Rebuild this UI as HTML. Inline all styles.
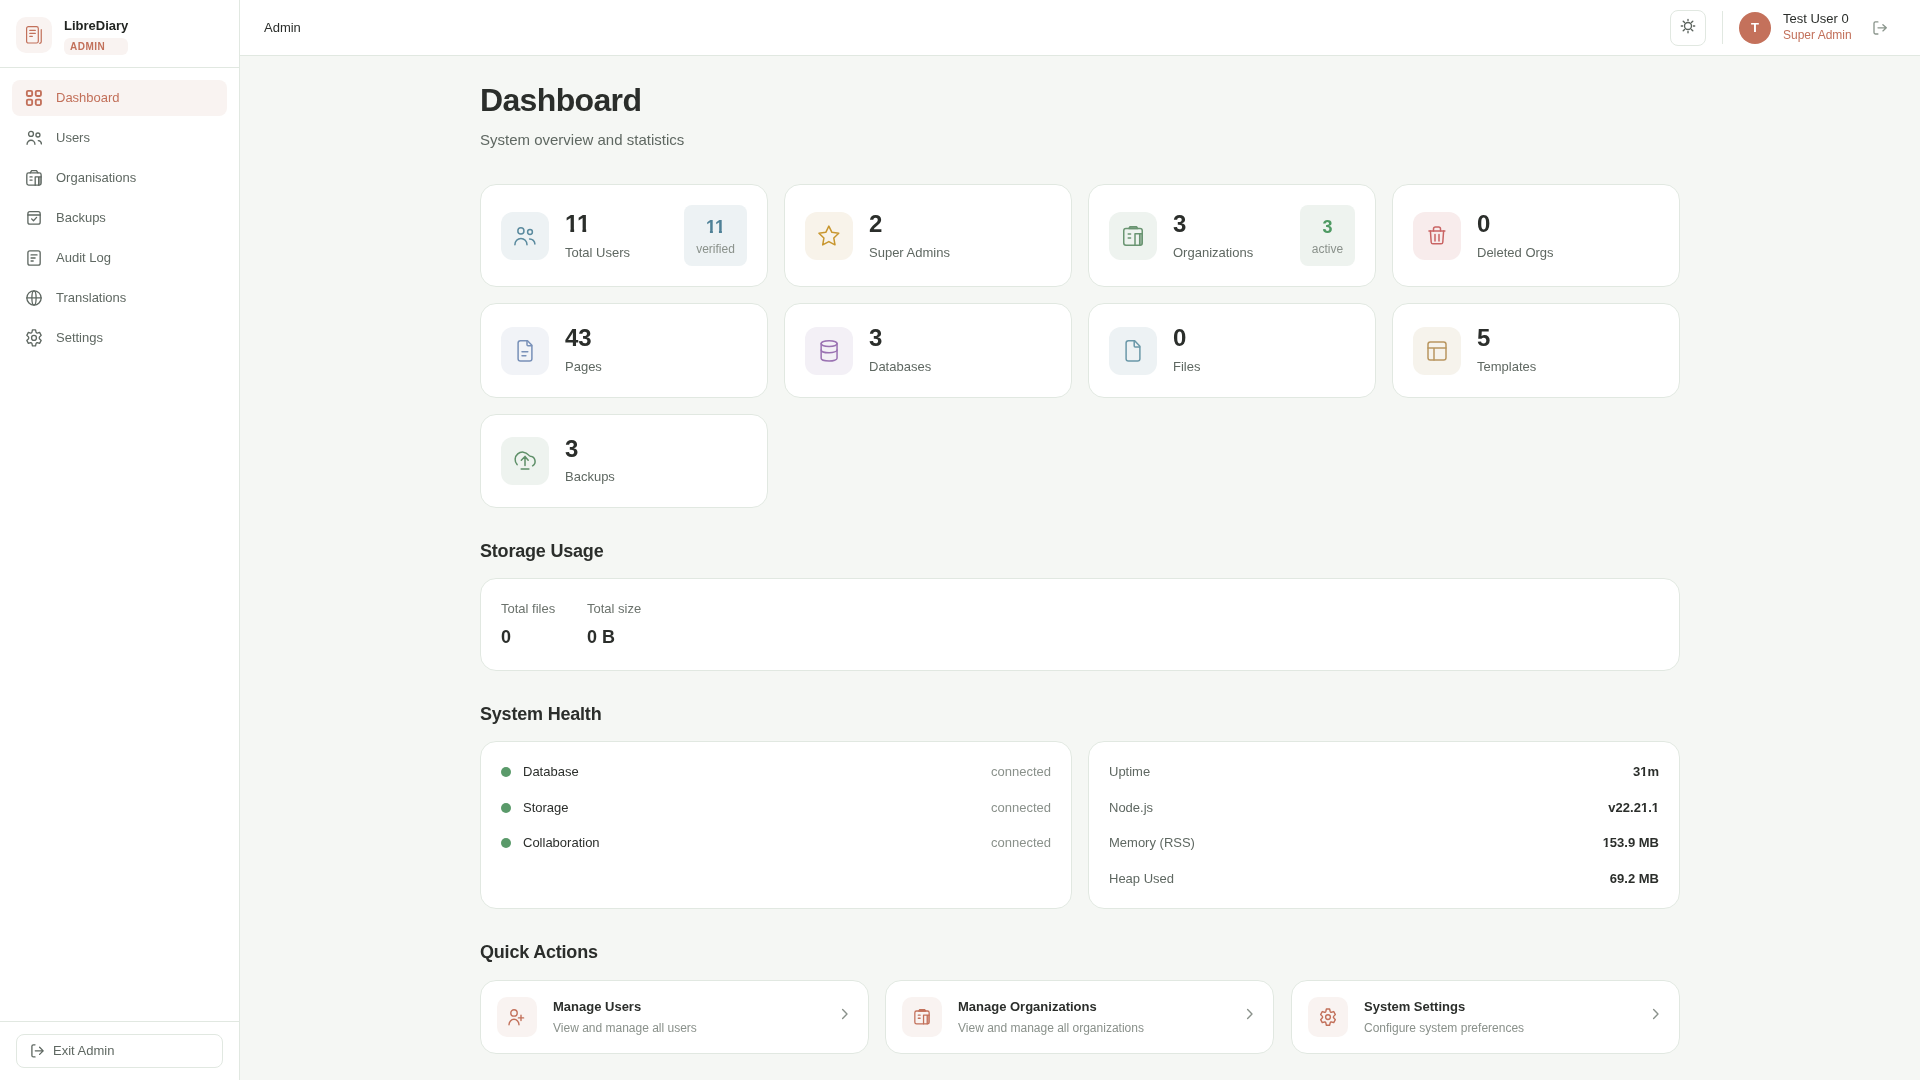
<!DOCTYPE html>
<html>
<head>
<meta charset="utf-8">
<title>LibreDiary Admin</title>
<style>
*{box-sizing:border-box;margin:0;padding:0}
html,body{width:1920px;height:1080px;overflow:hidden}
body{font-family:"Liberation Sans",sans-serif;background:#f5f7f4;color:#2b2e2b;position:relative}
.abs{position:absolute;display:block;overflow:visible}
.side{position:absolute;left:0;top:0;width:240px;height:1080px;background:#fff;border-right:1px solid #e1e8e1}
.brand{position:absolute;left:0;top:0;width:239px;height:68px;border-bottom:1px solid #e1e8e1}
.logo{position:absolute;left:16px;top:17px;width:36px;height:36px;border-radius:10px;background:#f9f3f1}
.bname{position:absolute;left:64px;top:18px;font-size:13px;font-weight:700;line-height:16px;color:#222522;white-space:nowrap}
.badge{position:absolute;left:64px;top:38px;width:64px;height:17px;border-radius:6px;background:#f9f3f1;color:#c2705a;font-size:10px;font-weight:700;letter-spacing:0.5px;line-height:17px;padding-left:6px}
.nav{position:absolute;left:12px;width:215px;height:36px;border-radius:8px;font-size:13px;color:#5f6862;line-height:36px;white-space:nowrap}
.nav.active{background:#f9f3f1;color:#c2705a}
.nav span{position:absolute;left:44px;top:0}
.foot{position:absolute;left:0;top:1021px;width:239px;height:59px;border-top:1px solid #e1e8e1}
.exit{position:absolute;left:16px;top:12px;width:207px;height:34px;border:1px solid #e1e8e1;border-radius:8px;font-size:13px;color:#5f6862;line-height:32px}
.exit span{position:absolute;left:36px;top:0}
.top{position:absolute;left:240px;top:0;width:1680px;height:56px;background:#fff;border-bottom:1px solid #e1e8e1}
.crumb{position:absolute;left:24px;top:0;line-height:55px;font-size:13px;color:#2b2e2b}
.themebtn{position:absolute;left:1430px;top:10px;width:36px;height:36px;border:1px solid #e1e8e1;border-radius:8px}
.vdiv{position:absolute;left:1482px;top:11px;width:1px;height:33px;background:#e1e8e1}
.avatar{position:absolute;left:1499px;top:12px;width:32px;height:32px;border-radius:50%;background:#c4715b;color:#fff;font-size:13px;font-weight:700;text-align:center;line-height:32px}
.uname{position:absolute;left:1543px;top:11px;font-size:13px;line-height:16px;color:#2b2e2b;white-space:nowrap}
.urole{position:absolute;left:1543px;top:28px;font-size:12px;line-height:15px;color:#c2705a;white-space:nowrap}
.h1{position:absolute;left:480px;top:80px;font-size:32px;font-weight:700;line-height:40px;letter-spacing:-0.65px;color:#2b2e2b;white-space:nowrap}
.sub{position:absolute;left:480px;top:130px;font-size:15px;line-height:20px;color:#5f6862;white-space:nowrap}
.card{position:absolute;background:#fff;border:1px solid #e1e8e1;border-radius:16px}
.ib{position:absolute;left:20px;width:48px;height:48px;border-radius:12px}
.num{position:absolute;left:84px;font-size:24px;font-weight:700;line-height:28px;color:#2b2e2b}
.lbl{position:absolute;left:84px;font-size:13px;line-height:16px;color:#5f6862;white-space:nowrap}
.pill{position:absolute;right:20px;top:20px;width:63px;height:61px;border-radius:8px;text-align:center}
.pill b{position:absolute;left:0;right:0;top:11px;font-size:18px;line-height:22px}
.pill i{position:absolute;left:0;right:0;top:37px;font-style:normal;font-size:12px;line-height:15px;color:#8a918b}
.h2{position:absolute;left:480px;font-size:18px;font-weight:700;line-height:22px;letter-spacing:-0.2px;color:#2b2e2b;white-space:nowrap}
.slbl{position:absolute;font-size:13px;line-height:16px;color:#6b726c;white-space:nowrap}
.sval{position:absolute;font-size:18px;font-weight:700;line-height:22px;color:#2b2e2b;white-space:nowrap}
.row{position:absolute;left:20px;right:20px;height:20px;font-size:13px;line-height:20px;white-space:nowrap}
.dot{position:absolute;left:0;top:5px;width:10px;height:10px;border-radius:50%;background:#5a9a6a}
.rn{position:absolute;left:22px;top:0;color:#2b2e2b}
.rv{position:absolute;right:0;top:0;color:#8a918b}
.kl{position:absolute;left:0;top:0;color:#5f6862}
.kv{position:absolute;right:0;top:0;color:#2b2e2b;font-weight:700}
.qa{position:absolute;top:980px;width:389px;height:74px;background:#fff;border:1px solid #e1e8e1;border-radius:16px}
.qi{position:absolute;left:16px;top:16px;width:40px;height:40px;border-radius:10px;background:#f9f3f1}
.qt{position:absolute;left:72px;top:18px;font-size:13px;font-weight:700;line-height:16px;color:#2b2e2b;white-space:nowrap}
.qd{position:absolute;left:72px;top:40px;font-size:12px;line-height:15px;color:#8a918b;white-space:nowrap}
body{-webkit-font-smoothing:antialiased}
.side,.top,.card,.qa,.h1,.h2,.sub{will-change:transform}
.o24{display:inline-block;clip-path:polygon(0 0,100% 0,100% 18.75px,9.14px 18.75px,9.14px 100%,5.35px 100%,5.35px 18.75px,0 18.75px)}.o24.k{margin-right:-1.324px}.o18{display:inline-block;clip-path:polygon(0 0,100% 0,100% 14.36px,6.92px 14.36px,6.92px 100%,3.95px 100%,3.95px 14.36px,0 14.36px)}.o18.k{margin-right:-0.993px}.o13{display:inline-block;clip-path:polygon(0 0,100% 0,100% 11.87px,5.07px 11.87px,5.07px 100%,2.78px 100%,2.78px 11.87px,0 11.87px)}.o13.k{margin-right:-0.717px}
</style>
</head>
<body>
<div class="side">
  <div class="brand">
    <div class="logo"><svg class="abs " style="left:10px;top:9px;color:#c2705a" width="19" height="19" viewBox="0 0 19 19" fill="none" stroke="#c2705a" stroke-width="1.2" stroke-linecap="round" stroke-linejoin="round"><rect x="0.6" y="0.6" width="11.7" height="16.4" rx="1.8"/><path d="M3.8 4.4H9.3M3.8 7.4H9.3M3.8 10.4H6.3"/><path d="M15.25 3.7V15.8Q15.25 17.1 13.8 17.3"/></svg></div>
    <div class="bname">LibreDiary</div>
    <div class="badge">ADMIN</div>
  </div>
<div class="nav active" style="top:80px"><svg class="abs " style="left:12px;top:8px;color:#c2705a" width="20" height="20" viewBox="0 0 20 20" fill="none" stroke="#c2705a" stroke-width="1.33" stroke-linecap="round" stroke-linejoin="round"><g stroke-width="1.85"><rect x="2.85" y="2.85" width="5.3" height="5.1" rx="1.2"/><rect x="11.75" y="2.85" width="5.2" height="5.1" rx="1.2"/><rect x="2.85" y="11.65" width="5.3" height="5.4" rx="1.2"/><rect x="11.75" y="11.65" width="5.2" height="5.4" rx="1.2"/></g></svg><span>Dashboard</span></div>
<div class="nav" style="top:120px"><svg class="abs " style="left:12px;top:8px;color:#5f6862" width="20" height="20" viewBox="0 0 20 20" fill="none" stroke="#5f6862" stroke-width="1.33" stroke-linecap="round" stroke-linejoin="round"><circle cx="7" cy="5.9" r="2.45"/><circle cx="13.95" cy="7" r="2"/><path d="M3.07 16.33A3.93 4.1 0 0 1 10.93 16.33"/><path d="M14.3 12.6A3.4 3.4 0 0 1 17.4 15.9"/></svg><span>Users</span></div>
<div class="nav" style="top:160px"><svg class="abs " style="left:12px;top:8px;color:#5f6862" width="20" height="20" viewBox="0 0 20 20" fill="none" stroke="#5f6862" stroke-width="1.33" stroke-linecap="round" stroke-linejoin="round"><rect x="2.8" y="4.9" width="14.33" height="12.27" rx="1.8"/><path d="M6.2 4.9L7.6 2.7H12.5L13.9 4.9"/><path d="M6 8.9H8.1M6 12.06H8.1"/><path d="M11.2 17.17V8.9H17.13M14.7 8.9V17.17"/><rect x="14.7" y="8.9" width="2.4" height="8.2" fill="currentColor" stroke="none" opacity=".5"/></svg><span>Organisations</span></div>
<div class="nav" style="top:200px"><svg class="abs " style="left:12px;top:8px;color:#5f6862" width="20" height="20" viewBox="0 0 20 20" fill="none" stroke="#5f6862" stroke-width="1.33" stroke-linecap="round" stroke-linejoin="round"><rect x="3.9" y="3.7" width="12.27" height="12.5" rx="2"/><path d="M3.9 7H16.17"/><path d="M7.6 10.9L9.5 12.8L12.6 9.4"/></svg><span>Backups</span></div>
<div class="nav" style="top:240px"><svg class="abs " style="left:12px;top:8px;color:#5f6862" width="20" height="20" viewBox="0 0 20 20" fill="none" stroke="#5f6862" stroke-width="1.33" stroke-linecap="round" stroke-linejoin="round"><rect x="3.9" y="2.85" width="12.27" height="14.32" rx="2"/><path d="M7.07 6.88H13.03M7.07 10H11.1M7.07 13H9.2"/></svg><span>Audit Log</span></div>
<div class="nav" style="top:280px"><svg class="abs " style="left:12px;top:8px;color:#5f6862" width="20" height="20" viewBox="0 0 20 20" fill="none" stroke="#5f6862" stroke-width="1.33" stroke-linecap="round" stroke-linejoin="round"><circle cx="10" cy="9.95" r="7.15"/><path d="M2.85 9.95H17.15"/><ellipse cx="10" cy="9.95" rx="2.1" ry="7.15"/></svg><span>Translations</span></div>
<div class="nav" style="top:320px"><svg class="abs " style="left:12px;top:8px;color:#5f6862" width="20" height="20" viewBox="0 0 20 20" fill="none" stroke="#5f6862" stroke-width="1.33" stroke-linecap="round" stroke-linejoin="round"><path transform="translate(10 9.9) scale(0.92 1) translate(-10 -9.9)" vector-effect="non-scaling-stroke" d="M7.75 4.34L8.30 1.88 L11.70 1.88 L12.25 4.34 Q12.70 5.22 13.69 5.17L16.09 4.41 L17.80 7.37 L15.94 9.06 Q15.40 9.90 15.94 10.74L17.80 12.43 L16.09 15.39 L13.69 14.63 Q12.70 14.58 12.25 15.46L11.70 17.92 L8.30 17.92 L7.75 15.46 Q7.30 14.58 6.31 14.63L3.91 15.39 L2.20 12.43 L4.06 10.74 Q4.60 9.90 4.06 9.06L2.20 7.37 L3.91 4.41 L6.31 5.17 Q7.30 5.22 7.75 4.34Z"/><circle cx="10" cy="9.9" r="2.45"/></svg><span>Settings</span></div>
  <div class="foot">
    <div class="exit"><svg class="abs " style="left:9px;top:7px;color:#5f6862" width="20" height="20" viewBox="0 0 20 20" fill="none" stroke="#5f6862" stroke-width="1.33" stroke-linecap="round" stroke-linejoin="round"><path d="M9 2.8H7.4Q5.9 2.8 5.9 4.3V13.4Q5.9 14.9 7.4 14.9H9"/><path d="M9.3 8.85H17.1M13.6 5.3L17.2 8.85L13.6 12.4"/></svg><span>Exit Admin</span></div>
  </div>
</div>
<div class="top">
  <div class="crumb">Admin</div>
  <div class="themebtn"><svg class="abs " style="left:9px;top:7px;color:#5a625c" width="16" height="16" viewBox="0 0 16 16" fill="none" stroke="#5a625c" stroke-width="1.35" stroke-linecap="round" stroke-linejoin="round"><circle cx="8" cy="8" r="3.5"/><path d="M8 1.3V2.6M8 13.4V14.7M1.3 8H2.6M13.4 8H14.7M3.2 3.2L4.6 4.6M11.4 11.4L12.8 12.8M3.2 12.8L4.6 11.4M11.4 4.6L12.8 3.2"/></svg></div>
  <div class="vdiv"></div>
  <div class="avatar">T</div>
  <div class="uname">Test User 0</div>
  <div class="urole">Super Admin</div>
  <svg class="abs " style="left:1632px;top:20px;color:#8a958c" width="16" height="16" viewBox="0 0 16 16" fill="none" stroke="#8a958c" stroke-width="1.33" stroke-linecap="round" stroke-linejoin="round"><path d="M5.9 1.9H3.4Q2 1.9 2 3.3V12.6Q2 14 3.4 14H5.9"/><path d="M6 7.8H14.2M10.9 4.7L14.3 7.8L10.9 10.9"/></svg>
</div>
<div class="h1">Dashboard</div>
<div class="sub">System overview and statistics</div>
<div class="card" style="left:480px;top:184px;width:288px;height:103px"><div class="ib" style="top:27px;background:#edf2f4"><svg class="abs " style="left:12px;top:12px;color:#5a8a9e" width="24" height="24" viewBox="0 0 24 24" fill="none" stroke="#5a8a9e" stroke-width="1.5" stroke-linecap="round" stroke-linejoin="round"><circle cx="7.9" cy="6.9" r="3.05"/><circle cx="17" cy="8" r="2.4"/><path d="M1.9 20.7A6 6.2 0 0 1 14 20.7"/><path d="M16.6 14.9A5.2 5.2 0 0 1 21.9 20"/></svg></div><div class="num" style="top:25px"><span class="o24 k">1</span><span class="o24">1</span></div><div class="lbl" style="top:60px">Total Users</div><div class="pill" style="width:63px;background:#edf2f4"><b style="color:#4f8197"><span class="o18 k">1</span><span class="o18">1</span></b><i>verified</i></div></div>
<div class="card" style="left:784px;top:184px;width:288px;height:103px"><div class="ib" style="top:27px;background:#f8f3ea"><svg class="abs " style="left:12px;top:12px;color:#c8962e" width="24" height="24" viewBox="0 0 24 24" fill="none" stroke="#c8962e" stroke-width="1.5" stroke-linecap="round" stroke-linejoin="round"><path d="M11.85 2.05L14.9 8.3L21.75 9.25L16.8 14.05L18 20.85L11.85 17.6L5.7 20.85L6.9 14.05L1.95 9.25L8.8 8.3Z"/></svg></div><div class="num" style="top:25px">2</div><div class="lbl" style="top:60px">Super Admins</div></div>
<div class="card" style="left:1088px;top:184px;width:288px;height:103px"><div class="ib" style="top:27px;background:#eef3ef"><svg class="abs " style="left:12px;top:12px;color:#6a9572" width="24" height="24" viewBox="0 0 24 24" fill="none" stroke="#6a9572" stroke-width="1.5" stroke-linecap="round" stroke-linejoin="round"><rect x="2.75" y="4.55" width="18.5" height="16.6" rx="2.2"/><path d="M7.8 4.55L9 2.75H15.5L16.7 4.55Z" fill="currentColor" fill-opacity=".45"/><path d="M7.2 9.9H9.6M7.2 13.9H9.6"/><path d="M14 21.15V9.8H21.25M18.7 9.8V21.15"/><rect x="18.7" y="9.8" width="2.55" height="11.3" fill="currentColor" stroke="none" opacity=".55"/></svg></div><div class="num" style="top:25px">3</div><div class="lbl" style="top:60px">Organizations</div><div class="pill" style="width:55px;background:#eef3ef"><b style="color:#4e9a63">3</b><i>active</i></div></div>
<div class="card" style="left:1392px;top:184px;width:288px;height:103px"><div class="ib" style="top:27px;background:#f8ecec"><svg class="abs " style="left:12px;top:12px;color:#c96464" width="24" height="24" viewBox="0 0 24 24" fill="none" stroke="#c96464" stroke-width="1.5" stroke-linecap="round" stroke-linejoin="round"><path d="M3.95 7.05H19.85"/><path d="M8.5 7.05V4.9Q8.5 2.95 10.45 2.95H13.55Q15.5 2.95 15.5 4.9V7.05"/><path d="M5.4 7.05L6.2 18.2Q6.35 19.75 7.9 19.75H16.1Q17.65 19.75 17.8 18.2L18.6 7.05"/><path d="M10 10.5V17M14 10.5V17"/></svg></div><div class="num" style="top:25px">0</div><div class="lbl" style="top:60px">Deleted Orgs</div></div>
<div class="card" style="left:480px;top:303px;width:288px;height:95px"><div class="ib" style="top:23px;background:#f1f3f7"><svg class="abs " style="left:12px;top:12px;color:#7890b8" width="24" height="24" viewBox="0 0 24 24" fill="none" stroke="#7890b8" stroke-width="1.5" stroke-linecap="round" stroke-linejoin="round"><path d="M14.5 1.8H7.4Q5.1 1.8 5.1 4.1V19.75Q5.1 22.05 7.4 22.05H16.6Q18.9 22.05 18.9 19.75V6.3Z"/><path d="M14 2.1V5.8Q14 6.8 15 6.8H18.6"/><path d="M9 12.85H14.8M9 16.8H12.9"/></svg></div><div class="num" style="top:20px">43</div><div class="lbl" style="top:55px">Pages</div></div>
<div class="card" style="left:784px;top:303px;width:288px;height:95px"><div class="ib" style="top:23px;background:#f3f0f6"><svg class="abs " style="left:12px;top:12px;color:#9a72b2" width="24" height="24" viewBox="0 0 24 24" fill="none" stroke="#9a72b2" stroke-width="1.5" stroke-linecap="round" stroke-linejoin="round"><ellipse cx="12.1" cy="4.6" rx="7.95" ry="2.85"/><path d="M4.15 4.6V19.2A7.95 2.85 0 0 0 20.05 19.2V4.6"/><path d="M4.15 10.9A7.95 2.85 0 0 0 20.05 10.9"/></svg></div><div class="num" style="top:20px">3</div><div class="lbl" style="top:55px">Databases</div></div>
<div class="card" style="left:1088px;top:303px;width:288px;height:95px"><div class="ib" style="top:23px;background:#edf2f4"><svg class="abs " style="left:12px;top:12px;color:#6a98a8" width="24" height="24" viewBox="0 0 24 24" fill="none" stroke="#6a98a8" stroke-width="1.5" stroke-linecap="round" stroke-linejoin="round"><path d="M13.7 1.8H7.4Q5.1 1.8 5.1 4.1V19.75Q5.1 22.05 7.4 22.05H16.6Q18.9 22.05 18.9 19.75V7.3Z"/><path d="M13.2 2.1V7Q13.2 8 14.2 8H18.6"/></svg></div><div class="num" style="top:20px">0</div><div class="lbl" style="top:55px">Files</div></div>
<div class="card" style="left:1392px;top:303px;width:288px;height:95px"><div class="ib" style="top:23px;background:#f6f3ec"><svg class="abs " style="left:12px;top:12px;color:#b99660" width="24" height="24" viewBox="0 0 24 24" fill="none" stroke="#b99660" stroke-width="1.5" stroke-linecap="round" stroke-linejoin="round"><rect x="3" y="3" width="18" height="18" rx="2.3"/><path d="M3 9H21M9 9V21"/></svg></div><div class="num" style="top:20px">5</div><div class="lbl" style="top:55px">Templates</div></div>
<div class="card" style="left:480px;top:414px;width:288px;height:94px"><div class="ib" style="top:22px;background:#eef3ef"><svg class="abs " style="left:12px;top:12px;color:#5e8f68" width="24" height="24" viewBox="0 0 24 24" fill="none" stroke="#5e8f68" stroke-width="1.5" stroke-linecap="round" stroke-linejoin="round"><path d="M4.1 15.6A7.45 7.45 0 1 1 15.4 5.9Q16.3 7 17.4 7.2A5.2 5.2 0 0 1 19.6 16.8"/><path d="M12 16.6V7.5M8.3 11.2L12 7.4L15.2 11.2"/><path d="M8.2 20H15.85"/></svg></div><div class="num" style="top:20px">3</div><div class="lbl" style="top:54px">Backups</div></div>
<div class="h2" style="top:540px">Storage Usage</div>
<div class="card" style="left:480px;top:578px;width:1200px;height:93px">
  <div class="slbl" style="left:20px;top:22px">Total files</div>
  <div class="sval" style="left:20px;top:47px">0</div>
  <div class="slbl" style="left:106px;top:22px">Total size</div>
  <div class="sval" style="left:106px;top:47px">0 B</div>
</div>
<div class="h2" style="top:703px">System Health</div>
<div class="card" style="left:480px;top:741px;width:592px;height:168px">
  <div class="row" style="top:20px"><div class="dot"></div><div class="rn">Database</div><div class="rv">connected</div></div>
  <div class="row" style="top:56px"><div class="dot"></div><div class="rn">Storage</div><div class="rv">connected</div></div>
  <div class="row" style="top:91px"><div class="dot"></div><div class="rn">Collaboration</div><div class="rv">connected</div></div>
</div>
<div class="card" style="left:1088px;top:741px;width:592px;height:168px">
  <div class="row" style="top:20px"><div class="kl">Uptime</div><div class="kv">3<span class="o13">1</span>m</div></div>
  <div class="row" style="top:56px"><div class="kl">Node.js</div><div class="kv">v22.2<span class="o13">1</span>.<span class="o13">1</span></div></div>
  <div class="row" style="top:91px"><div class="kl">Memory (RSS)</div><div class="kv"><span class="o13">1</span>53.9 MB</div></div>
  <div class="row" style="top:127px"><div class="kl">Heap Used</div><div class="kv">69.2 MB</div></div>
</div>
<div class="h2" style="top:941px">Quick Actions</div>
<div class="qa" style="left:480px;width:389.33px"><div class="qi"><svg class="abs " style="left:8px;top:8px;color:#c2705a" width="24" height="24" viewBox="0 0 24 24" fill="none" stroke="#c2705a" stroke-width="1.4" stroke-linecap="round" stroke-linejoin="round"><circle cx="9" cy="7.9" r="3.2"/><path d="M4 19.8A5 5.5 0 0 1 14 19.8"/><path d="M13.4 12.9H18.6M16 10.3V15.5"/></svg></div><div class="qt">Manage Users</div><div class="qd">View and manage all users</div><svg class="abs " style="left:359.5px;top:27px;color:#8a918b" width="12" height="12" viewBox="0 0 12 12" fill="none" stroke="#8a918b" stroke-width="1.4" stroke-linecap="round" stroke-linejoin="round"><path d="M1.6 1.6L6 6L1.6 10.4"/></svg></div>
<div class="qa" style="left:885.33px;width:389.33px"><div class="qi"><svg class="abs " style="left:8px;top:8px;color:#c2705a" width="24" height="24" viewBox="-3.5 -3.2 31 31" fill="none" stroke="#c2705a" stroke-width="1.65" stroke-linecap="round" stroke-linejoin="round"><rect x="2.75" y="4.55" width="18.5" height="16.6" rx="2.2"/><path d="M7.8 4.55L9 2.75H15.5L16.7 4.55Z" fill="currentColor" fill-opacity=".45"/><path d="M7.2 9.9H9.6M7.2 13.9H9.6"/><path d="M14 21.15V9.8H21.25M18.7 9.8V21.15"/><rect x="18.7" y="9.8" width="2.55" height="11.3" fill="currentColor" stroke="none" opacity=".55"/></svg></div><div class="qt">Manage Organizations</div><div class="qd">View and manage all organizations</div><svg class="abs " style="left:359.5px;top:27px;color:#8a918b" width="12" height="12" viewBox="0 0 12 12" fill="none" stroke="#8a918b" stroke-width="1.4" stroke-linecap="round" stroke-linejoin="round"><path d="M1.6 1.6L6 6L1.6 10.4"/></svg></div>
<div class="qa" style="left:1290.67px;width:389.33px"><div class="qi"><svg class="abs " style="left:8px;top:8px;color:#c2705a" width="24" height="24" viewBox="0 0 24 24" fill="none" stroke="#c2705a" stroke-width="1.4" stroke-linecap="round" stroke-linejoin="round"><path transform="translate(12 12.1) scale(0.93 1) translate(-12 -12.1)" vector-effect="non-scaling-stroke" d="M9.62 6.48L10.27 3.98 L13.73 3.98 L14.38 6.48 Q14.68 7.45 15.67 7.23L18.17 6.55 L19.89 9.54 L18.05 11.36 Q17.37 12.10 18.05 12.84L19.89 14.66 L18.17 17.65 L15.67 16.97 Q14.68 16.75 14.38 17.72L13.73 20.22 L10.27 20.22 L9.62 17.72 Q9.32 16.75 8.33 16.97L5.83 17.65 L4.11 14.66 L5.95 12.84 Q6.63 12.10 5.95 11.36L4.11 9.54 L5.83 6.55 L8.33 7.23 Q9.32 7.45 9.62 6.48Z"/><circle cx="12" cy="12.1" r="2.4"/></svg></div><div class="qt">System Settings</div><div class="qd">Configure system preferences</div><svg class="abs " style="left:359.5px;top:27px;color:#8a918b" width="12" height="12" viewBox="0 0 12 12" fill="none" stroke="#8a918b" stroke-width="1.4" stroke-linecap="round" stroke-linejoin="round"><path d="M1.6 1.6L6 6L1.6 10.4"/></svg></div>
</body>
</html>
